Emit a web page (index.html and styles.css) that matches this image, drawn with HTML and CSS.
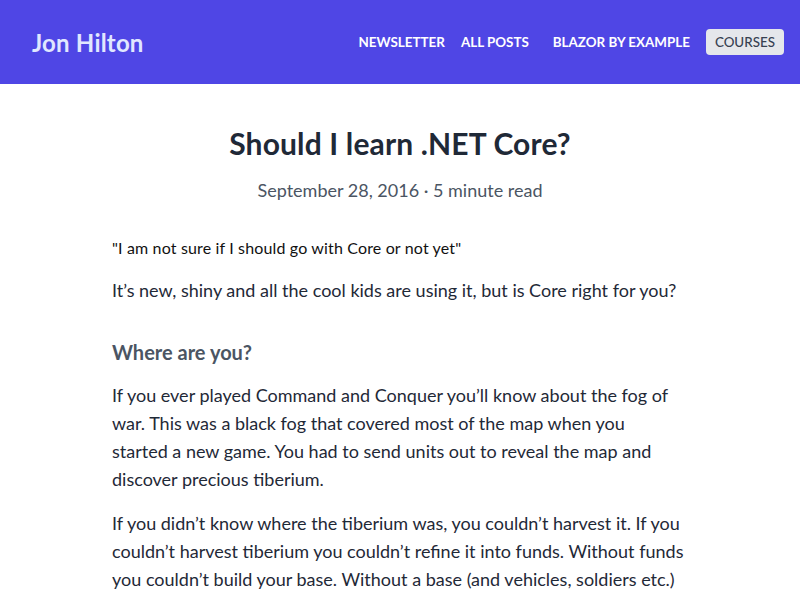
FILE: index.html
```html
<!DOCTYPE html>
<html>
<head>
<meta charset="utf-8">
<link rel="stylesheet" href="styles.css">
</head>
<body>
<header class="site-header">
  <a class="brand" href="#">Jon Hilton</a>
  <nav class="nav">
    <a class="nav-link" href="#">Newsletter</a>
    <a class="nav-link" href="#">All Posts</a>
    <a class="nav-link nav-link-wide" href="#">Blazor by Example</a>
    <a class="nav-button" href="#">Courses</a>
  </nav>
</header>
<main class="post">
  <h1 class="post-title">Should I learn .NET Core?</h1>
  <p class="post-meta">September 28, 2016 · 5 minute read</p>
  <article class="post-body">
    <p class="quote">"I am not sure if I should go with Core or not yet"</p>
    <p>It’s new, shiny and all the cool kids are using it, but is Core right for you?</p>
    <h2>Where are you?</h2>
    <p>If you ever played Command and Conquer you’ll know about the fog of war. This was a black fog that covered most of the map when you started&nbsp;a new game. You had to send units out to reveal the map and discover precious tiberium.</p>
    <p>If you didn’t know where the tiberium was, you couldn’t harvest it. If you couldn’t harvest tiberium you couldn’t refine it into funds. Without funds you couldn’t build your base. Without a base (and vehicles, soldiers etc.) you couldn’t defend yourself from the enemy.</p>
  </article>
</main>
</body>
</html>
```
FILE: styles.css
```css
* { box-sizing: border-box; }
body {
  margin: 0;
  font-family: "Lato", "Noto Sans", sans-serif;
  color: #1f2937;
  background: #fff;
}
a { text-decoration: none; }
.site-header {
  height: 84px;
  background: #4f46e5;
  display: flex;
  align-items: center;
  justify-content: space-between;
  padding: 0 16px 0 32px;
}
.brand {
  color: #e0e7ff;
  font-size: 24px;
  font-weight: 700;
  letter-spacing: 0.2px;
}
.nav {
  display: flex;
  align-items: center;
}
.nav-link {
  color: #fff;
  font-size: 13.4px;
  font-weight: 700;
  text-transform: uppercase;
  margin-right: 16px;
}
.nav-link-wide { margin-left: 8px; }
.nav-button {
  color: #374151;
  background: #e5e7eb;
  font-size: 13.4px;
  font-weight: 500;
  text-transform: uppercase;
  line-height: 26px;
  padding: 0 9px;
  border-radius: 4px;
}
.post {
  width: 576px;
  margin: 0 auto;
  padding-top: 39px;
}
.post-title {
  text-align: center;
  font-size: 30px;
  font-weight: 700;
  margin: 0;
  line-height: 40px;
  letter-spacing: 0.15px;
}
.post-meta {
  text-align: center;
  color: #4b5563;
  font-size: 18px;
  margin: 13px 0 0;
  line-height: 28px;
}
.post-body { margin-top: 32px; }
.post-body p {
  font-size: 18px;
  line-height: 28px;
  margin: 0 0 16px;
  color: #1f2937;
}
.post-body p.quote {
  font-size: 16px;
  line-height: 24px;
  color: #111;
  margin-bottom: 16px;
  letter-spacing: 0.15px;
}
.post-body h2 {
  font-size: 20px;
  font-weight: 700;
  color: #4b5563;
  margin: 34px 0 15px;
  line-height: 28px;
}
```
